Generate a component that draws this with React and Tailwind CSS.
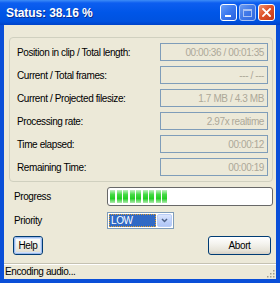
const font = { fontFamily: '"Liberation Sans", Arial, sans-serif' };

const rows = [
  ['Position in clip / Total length:', '00:00:36 / 00:01:35'],
  ['Current / Total frames:', '--- / ---'],
  ['Current / Projected filesize:', '1.7 MB / 4.3 MB'],
  ['Processing rate:', '2.97x realtime'],
  ['Time elapsed:', '00:00:12'],
  ['Remaining Time:', '00:00:19'],
];

const CaptionButton = ({ kind }) => {
  if (kind === 'close') {
    return (
      <div className="w-[17px] h-[17px] rounded-[3px] border border-white flex items-center justify-center bg-[linear-gradient(135deg,#f0936f,#e0532a_45%,#c2381a)]">
        <svg width="9" height="9" viewBox="0 0 9 9">
          <path d="M1 1 L8 8 M8 1 L1 8" stroke="white" strokeWidth="1.8" strokeLinecap="square" />
        </svg>
      </div>
    );
  }
  if (kind === 'max') {
    return (
      <div className="w-[17px] h-[17px] rounded-[3px] border border-[#a9c2f3] flex items-center justify-center bg-[linear-gradient(135deg,#6b9bf0,#3f78e8_50%,#3168e0)]">
        <div className="w-[9px] h-[8px] border border-[#a9c2f3] border-t-2" />
      </div>
    );
  }
  return (
    <div className="w-[17px] h-[17px] rounded-[3px] border border-white flex items-end justify-start pl-[4px] pb-[3px] bg-[linear-gradient(135deg,#6aa0f8,#3a78ef_50%,#2a5fdc)]">
      <div className="w-[6px] h-[2px] bg-white" />
    </div>
  );
};

const XpButton = ({ children, focused, width }) => (
  <div className={`${width} h-[19px] rounded-[3px] border border-[#003c74] bg-[linear-gradient(to_bottom,#ffffff,#f4f3ee_40%,#e6e3d8_80%,#d6d0c5)] flex items-center justify-center`}>
    <div className={`w-full h-full rounded-[2px] flex items-center justify-center text-[10px] text-black ${focused ? 'border border-[#9db9eb] shadow-[inset_0_0_0_1px_#cde0fb]' : ''}`}>
      {children}
    </div>
  </div>
);

export default function App() {
  return (
    <div style={font} className="w-[280px] h-[283px] flex flex-col bg-[#0a4fd8] overflow-hidden">
      {/* title bar */}
      <div className="h-[25px] shrink-0 flex items-center pl-[6px] pr-[5px] bg-[linear-gradient(to_bottom,#3d8cf7,#0d5ef0_12%,#0056e8_50%,#0052e0_85%,#0043c9)]">
        <span className="flex-1 text-white font-bold text-[12px] tracking-[-0.1px] [text-shadow:1px_1px_0_#0a2f8f]">Status: 38.16 %</span>
        <div className="flex gap-[2px]">
          <CaptionButton kind="min" />
          <CaptionButton kind="max" />
          <CaptionButton kind="close" />
        </div>
      </div>

      {/* client area */}
      <div className="flex-1 mx-[4px] mb-[4px] bg-[#ece9d8] flex flex-col text-[10px] tracking-[-0.4px] text-black">
        <div className="mt-[12px] ml-[5px] mr-[3px] h-[145px] border border-[#d0d0bf] rounded-[4px] flex flex-col gap-[5px] pt-[5px] pl-[7px] pr-[4px]">
          {rows.map(([label, value]) => (
            <div key={label} className="flex items-center h-[18px]">
              <span className="flex-1">{label}</span>
              <div className="w-[108px] h-[18px] border border-[#7f9db9] flex items-center justify-end pr-[3px] text-[#aca899]">
                {value}
              </div>
            </div>
          ))}
        </div>

        <div className="flex items-center mt-[5px] pl-[10px] pr-[3px] h-[19px]">
          <span className="w-[93px]">Progress</span>
          <div className="flex-1 h-[19px] rounded-[3px] border border-[#686868] bg-white flex items-center gap-[1.5px] pl-[2px]">
            {Array.from({ length: 9 }).map((_, i) => (
              <div key={i} className="w-[5px] h-[13px] bg-[linear-gradient(to_bottom,#c4f2c4,#45da45_35%,#25cf25_65%,#b0ebb0)]" />
            ))}
          </div>
        </div>

        <div className="flex items-center mt-[6px] pl-[10px] h-[17px]">
          <span className="w-[93px]">Priority</span>
          <div className="w-[67px] h-[17px] border border-[#7f9db9] bg-white flex items-stretch p-[1px]">
            <div className="flex-1 bg-[#316ac5] border border-dotted border-[#e0a030] text-white flex items-center pl-[1px]">LOW</div>
            <div className="w-[15px] ml-[1px] rounded-[2px] bg-[linear-gradient(to_bottom,#dce6fc,#c1d3fb_50%,#b0c6f5)] border border-[#b9cdf6] flex items-center justify-center">
              <svg width="7" height="5" viewBox="0 0 7 5">
                <path d="M1 1 L3.5 3.5 L6 1" stroke="#4d6185" strokeWidth="1.5" fill="none" />
              </svg>
            </div>
          </div>
        </div>

        <div className="flex items-center justify-between mt-[7px] pl-[9px] pr-[5px]">
          <XpButton focused width="w-[30px]">Help</XpButton>
          <XpButton width="w-[63px]">Abort</XpButton>
        </div>

        <div className="mt-[8px] flex-1 border-t border-[#c5c2b2] shadow-[inset_0_1px_0_#ffffff] flex items-center justify-between pl-[1px] pr-[1px]">
          <span>Encoding audio...</span>
          <svg width="10" height="10" viewBox="0 0 10 10" className="self-end mb-[1px]">
            {[[8, 2], [8, 5], [5, 5], [8, 8], [5, 8], [2, 8]].map(([x, y]) => (
              <rect key={`${x}-${y}`} x={x} y={y} width="1.5" height="1.5" fill="#a09e8f" />
            ))}
          </svg>
        </div>
      </div>
    </div>
  );
}
